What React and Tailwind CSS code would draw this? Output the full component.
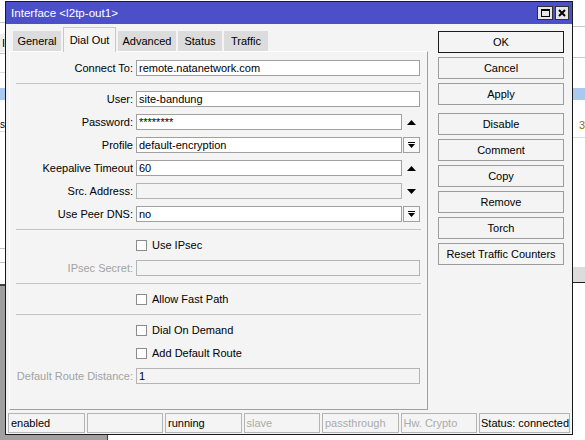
import React from "react";

const tabs = [
  { name: "General", w: "w-[48px]" },
  { name: "Dial Out", w: "w-[53px]", active: true },
  { name: "Advanced", w: "w-[58px]" },
  { name: "Status", w: "w-[44px]" },
  { name: "Traffic", w: "w-[44px]" },
];

const buttons = [
  "OK",
  "Cancel",
  "Apply",
  "Disable",
  "Comment",
  "Copy",
  "Remove",
  "Torch",
  "Reset Traffic Counters",
];

const statusCells = [
  { text: "enabled" },
  { text: "" },
  { text: "running" },
  { text: "slave", muted: true },
  { text: "passthrough", muted: true },
  { text: "Hw. Crypto", muted: true },
];

const UpArrow = () => (
  <svg width="9" height="5" viewBox="0 0 9 5">
    <polygon points="0,5 9,5 4.5,0" fill="#000" />
  </svg>
);

const DownArrow = () => (
  <svg width="9" height="5" viewBox="0 0 9 5">
    <polygon points="0,0 9,0 4.5,5" fill="#000" />
  </svg>
);

const DropButton = () => (
  <div className="w-[17px] h-[16px] border border-[#a0a0a0] bg-[#f8f8f8] flex items-center justify-center">
    <svg width="7" height="7" viewBox="0 0 7 7">
      <rect x="0" y="0" width="7" height="1" fill="#000" />
      <polygon points="0,2 7,2 3.5,6" fill="#000" />
    </svg>
  </div>
);

const Separator = () => <div className="h-px bg-[#c4c4c4]" />;

const Field = ({ label, value, side, disabled, mutedLabel }) => (
  <div className="flex items-center h-[16px]">
    <div
      className={`w-[117px] shrink-0 text-right whitespace-nowrap ${
        mutedLabel ? "text-[#a3a3a3]" : "text-black"
      }`}
    >
      {label}
    </div>
    <div
      className={`ml-[3px] h-[16px] border flex items-center pl-[2px] ${
        side ? "w-[266px]" : "w-[284px]"
      } ${
        disabled
          ? "bg-[#f4f4f4] border-[#b4b4b4]"
          : "bg-white border-[#a0a0a0]"
      }`}
    >
      {value}
    </div>
    {side === "up" && (
      <div className="w-[18px] flex justify-center">
        <UpArrow />
      </div>
    )}
    {side === "down" && (
      <div className="w-[18px] flex justify-center">
        <DownArrow />
      </div>
    )}
    {side === "drop" && (
      <div className="ml-px">
        <DropButton />
      </div>
    )}
  </div>
);

const Check = ({ label }) => (
  <div className="flex items-center h-[16px] pl-[120px]">
    <div className="w-[11px] h-[11px] border border-[#8c8c8c] bg-white" />
    <span className="ml-[5px]">{label}</span>
  </div>
);

export default function App() {
  return (
    <div className="relative w-[585px] h-[440px] overflow-hidden bg-white font-['Liberation_Sans',Arial,sans-serif] text-[11px] text-black leading-none">
      {/* windows behind */}
      <div className="absolute left-0 top-[22px] w-[6px] h-px bg-[#c8c8c8]" />
      <div className="absolute left-0 top-[34px] w-[6px] h-[18px] bg-[#eeeeee] flex items-center pl-[2px]">I</div>
      <div className="absolute left-0 top-[53px] w-[6px] h-px bg-[#c8c8c8]" />
      <div className="absolute left-0 top-[72px] w-[6px] h-px bg-[#dcdcdc]" />
      <div className="absolute left-0 right-0 top-[88px] h-[12px] bg-[#a9c9f0]" />
      <div className="absolute left-0 top-[120px] text-[10px]">s</div>
      <div className="absolute left-0 top-[131px] w-[6px] h-px bg-[#dcdcdc]" />
      <div className="absolute left-0 top-[248px] w-[6px] h-px bg-[#c4c4c4]" />
      <div className="absolute left-0 top-[262px] w-[6px] h-px bg-[#c4c4c4]" />
      <div className="absolute left-0 top-[284px] w-[108px] h-[160px] bg-[#a0a0a0] border-t-2 border-r border-[#404040]" />
      <div className="absolute left-[573px] top-[26px] w-[12px] h-px bg-[#c8c8c8]" />
      <div className="absolute left-[573px] top-[57px] w-[12px] h-px bg-[#c8c8c8]" />
      <div className="absolute left-[579px] top-[120px] text-[#a86400]">3</div>
      <div className="absolute left-[573px] top-[137px] w-[12px] h-px bg-[#dcdcdc]" />
      <div className="absolute left-[573px] top-[267px] w-[12px] h-[16px] bg-[#dcdcdc] border-b border-[#202020]" />

      {/* dialog window */}
      <div className="absolute left-[5px] top-px w-[568px] h-[434px] border border-[#1a1a1a] bg-[#f4f4f4] flex flex-col">
        <div className="h-[22px] shrink-0 bg-[#4b4fc8] flex items-center pl-[5px] pr-[3px]">
          <span className="text-white text-[11.6px]">Interface &lt;l2tp-out1&gt;</span>
          <div className="ml-auto flex gap-[2px]">
            <div className="w-[16px] h-[14px] bg-[#e6e6e6] border border-[#303030] flex items-center justify-center">
              <div className="w-[9px] h-[8px] border border-black border-t-2" />
            </div>
            <div className="w-[14px] h-[14px] bg-[#e6e6e6] border border-[#303030] flex items-center justify-center">
              <svg width="8" height="8" viewBox="0 0 8 8">
                <path d="M1 1 L7 7 M7 1 L1 7" stroke="#000" strokeWidth="2" />
              </svg>
            </div>
          </div>
        </div>

        <div className="flex flex-1">
          {/* left: tabs + panel */}
          <div className="ml-[3px] w-[419px] flex flex-col">
            <div className="h-[27px] flex items-end gap-[2px] pl-[4px] relative z-10">
              {tabs.map((t) =>
                t.active ? (
                  <div
                    key={t.name}
                    className={`${t.w} h-[25px] -mb-px bg-[#f4f4f4] border border-b-0 border-[#c8c8c8] flex items-center justify-center`}
                  >
                    {t.name}
                  </div>
                ) : (
                  <div
                    key={t.name}
                    className={`${t.w} h-[20px] bg-[#dcdcdc] flex items-center justify-center`}
                  >
                    {t.name}
                  </div>
                )
              )}
            </div>
            <div className="h-[359px] border border-t-white border-l-white border-r-[#a0a0a0] border-b-[#a0a0a0] pt-[8px] pl-[6px] pr-[6px] flex flex-col gap-[7px]">
              <Field label="Connect To:" value="remote.natanetwork.com" />
              <Separator />
              <Field label="User:" value="site-bandung" />
              <Field label="Password:" value="********" side="up" />
              <Field label="Profile" value="default-encryption" side="drop" />
              <Field label="Keepalive Timeout" value="60" side="up" />
              <Field label="Src. Address:" value="" side="down" disabled />
              <Field label="Use Peer DNS:" value="no" side="drop" />
              <Separator />
              <Check label="Use IPsec" />
              <Field label="IPsec Secret:" value="" disabled mutedLabel />
              <Separator />
              <Check label="Allow Fast Path" />
              <Separator />
              <Check label="Dial On Demand" />
              <Check label="Add Default Route" />
              <Field label="Default Route Distance:" value="1" disabled mutedLabel />
            </div>
          </div>

          {/* right: buttons */}
          <div className="ml-[10px] w-[126px] pt-[7px] flex flex-col gap-[4px]">
            {buttons.map((b) => (
              <div
                key={b}
                className={`h-[22px] shrink-0 flex items-center justify-center bg-[#f4f4f4] border ${
                  b === "OK" ? "border-[#1a1a1a]" : "border-[#9c9c9c]"
                } ${b === "Disable" ? "mt-[4px]" : ""}`}
              >
                {b}
              </div>
            ))}
          </div>
        </div>

        {/* status bar */}
        <div className="h-[20px] mt-[2px] mb-px px-[2px] flex gap-[2px] shrink-0">
          {statusCells.map((c, i) => (
            <div
              key={i}
              className={`w-[76.5px] shrink-0 border border-[#b4b4b4] flex items-center pl-[2px] whitespace-nowrap ${
                c.muted ? "text-[#ababab]" : "text-black"
              }`}
            >
              {c.text}
            </div>
          ))}
          <div className="flex-1 min-w-0 border border-[#b4b4b4] flex items-center pl-px whitespace-nowrap">
            Status: connected
          </div>
        </div>
      </div>
    </div>
  );
}
